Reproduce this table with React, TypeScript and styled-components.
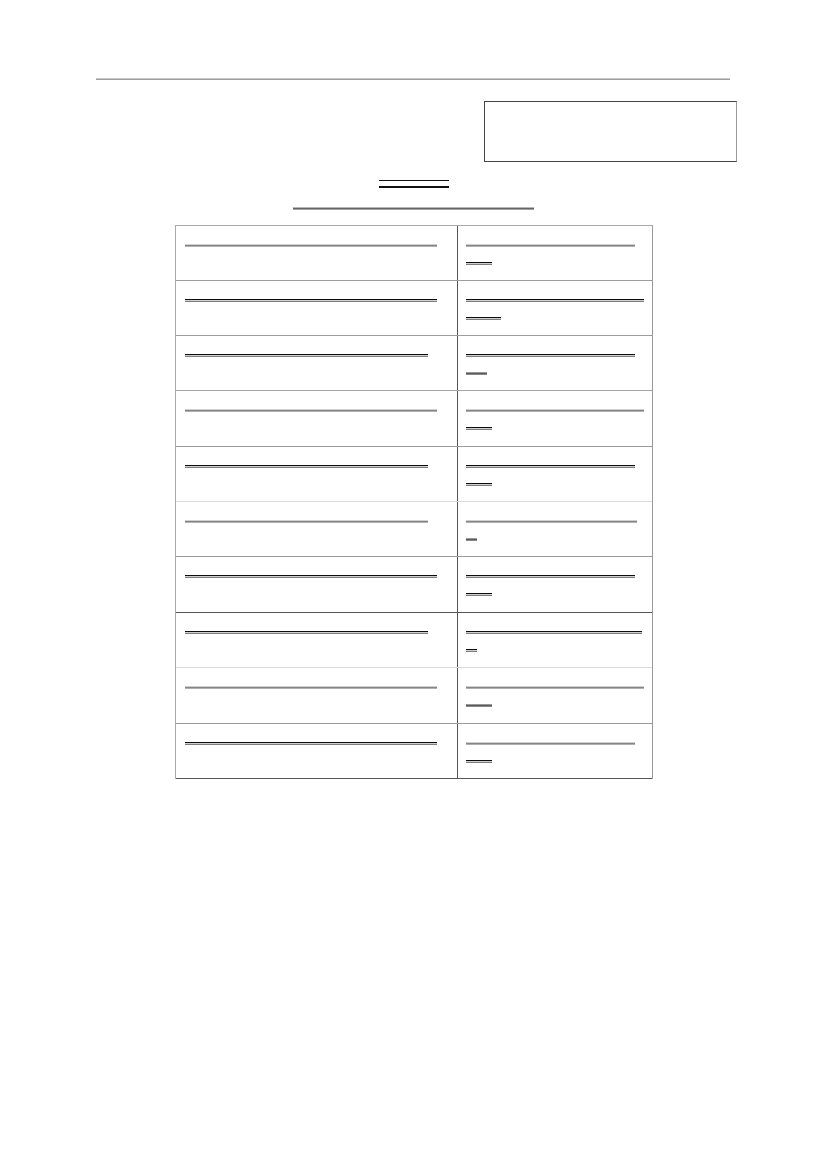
import styled, { createGlobalStyle } from "styled-components";

const GlobalStyle = createGlobalStyle`
  html, body {
    margin: 0;
    padding: 0;
    background: #fff;
    font-family: "Liberation Serif", serif;
  }
`;

type Tone = "gray" | "dark" | "solid";

const tones: Record<Tone, string> = {
  gray: "linear-gradient(#d0d0d0 0 1px, #858585 1px 2px, #b0b0b0 2px 3px)",
  dark: "linear-gradient(#0d0d0d 0 1px, #cfcfcf 1px 2px, #7e7e7e 2px 3px)",
  solid: "linear-gradient(#999 0 1px, #5a5a5a 1px 2px, #8a8a8a 2px 3px)",
};

interface RowData {
  h: number;
  line: string;
  left: [number, Tone];
  right: [number, Tone];
  short: [number, Tone];
}

const rows: RowData[] = [
  { h: 55, line: "#9c9c9c", left: [252, "gray"], right: [169, "gray"], short: [26, "dark"] },
  { h: 55, line: "#9c9c9c", left: [252, "dark"], right: [178, "dark"], short: [35, "dark"] },
  { h: 55, line: "#a4a4a4", left: [243, "dark"], right: [169, "dark"], short: [21, "solid"] },
  { h: 56, line: "#9c9c9c", left: [252, "gray"], right: [178, "gray"], short: [26, "dark"] },
  { h: 55, line: "#dadada", left: [243, "dark"], right: [169, "dark"], short: [26, "dark"] },
  { h: 55, line: "#9c9c9c", left: [243, "gray"], right: [171, "gray"], short: [11, "solid"] },
  { h: 56, line: "#555", left: [252, "dark"], right: [169, "dark"], short: [26, "dark"] },
  { h: 55, line: "#dadada", left: [243, "dark"], right: [176, "dark"], short: [11, "dark"] },
  { h: 56, line: "#9c9c9c", left: [252, "gray"], right: [178, "gray"], short: [26, "solid"] },
  { h: 55, line: "#555", left: [252, "dark"], right: [169, "gray"], short: [26, "dark"] },
];

const Page = styled.div`
  width: 827px;
  min-height: 1169px;
  display: flex;
  flex-direction: column;
  align-items: center;
  padding-top: 78px;
  box-sizing: border-box;
`;

const Header = styled.div`
  align-self: stretch;
  padding-left: 96px;
  display: flex;
  flex-direction: column;
  align-items: flex-start;
`;

const Rule = styled.div`
  width: 634px;
  height: 2px;
  background: linear-gradient(#c8c8c8 0 1px, #9e9e9e 1px 2px);
`;

const StampBox = styled.div`
  width: 253px;
  height: 61px;
  box-sizing: border-box;
  margin: 21px 0 0 388px;
  border: 1px solid #444;
  border-right-color: #9a9a9a;
`;

const Title = styled.div`
  margin-top: 18px;
  width: 70px;
  height: 8px;
  box-sizing: border-box;
  border-top: 1px solid #111;
  border-bottom: 2px solid #111;
`;

const Subtitle = styled.div`
  margin-top: 19px;
  width: 241px;
  height: 3px;
  background: linear-gradient(#b8b8b8 0 1px, #666 1px 2px, #a0a0a0 2px 3px);
`;

const Table = styled.div`
  margin-top: 15px;
  width: 478px;
  box-sizing: border-box;
  border-top: 1px solid #aaa;
  border-left: 1px solid #aaa;
  border-right: 1px solid #999;
`;

const Row = styled.div<{ $h: number; $line: string }>`
  display: grid;
  grid-template-columns: 281px 1fr;
  height: ${(p) => p.$h}px;
  box-sizing: border-box;
  border-bottom: 1px solid ${(p) => p.$line};
`;

const Cell = styled.div<{ $divider?: boolean }>`
  display: flex;
  flex-direction: column;
  gap: 15px;
  padding: 18px 0 0 ${(p) => (p.$divider ? 8 : 9)}px;
  border-left: ${(p) => (p.$divider ? "1px solid #555" : "none")};
`;

const Bar = styled.span<{ $w: number; $tone: Tone }>`
  display: block;
  width: ${(p) => p.$w}px;
  height: 3px;
  background: ${(p) => tones[p.$tone]};
`;

const App: React.FC = () => {
  return (
    <>
      <GlobalStyle />
      <Page>
        <Header>
          <Rule />
          <StampBox />
        </Header>
        <Title />
        <Subtitle />
        <Table>
          {rows.map((r, i) => (
            <Row key={i} $h={r.h} $line={r.line}>
              <Cell>
                <Bar $w={r.left[0]} $tone={r.left[1]} />
              </Cell>
              <Cell $divider>
                <Bar $w={r.right[0]} $tone={r.right[1]} />
                <Bar $w={r.short[0]} $tone={r.short[1]} />
              </Cell>
            </Row>
          ))}
        </Table>
      </Page>
    </>
  );
};

export default App;
